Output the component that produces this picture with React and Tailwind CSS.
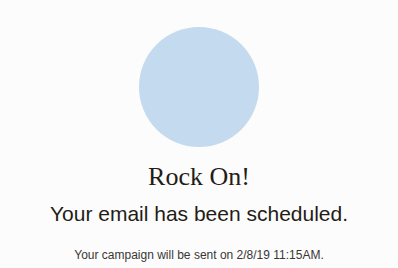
export default function App() {
  return (
    <div className="w-[398px] h-[268px] bg-[#fcfcfd] flex flex-col items-center overflow-hidden">
      <div className="mt-[27px] w-[120px] h-[120px] rounded-full bg-[#c3daef] shrink-0" />
      <h1 className="mt-[14px] text-[26px] leading-[32px] text-[#241c15] font-normal font-['Liberation_Serif',serif]">
        Rock On!
      </h1>
      <p className="mt-[7px] text-[21px] leading-[28px] text-[#241c15] font-['Liberation_Sans',sans-serif]">
        Your email has been scheduled.
      </p>
      <p className="mt-[17px] text-[12px] leading-[20px] text-[#3a3632] font-['Liberation_Sans',sans-serif]">
        Your campaign will be sent on 2/8/19 11:15AM.
      </p>
    </div>
  );
}
